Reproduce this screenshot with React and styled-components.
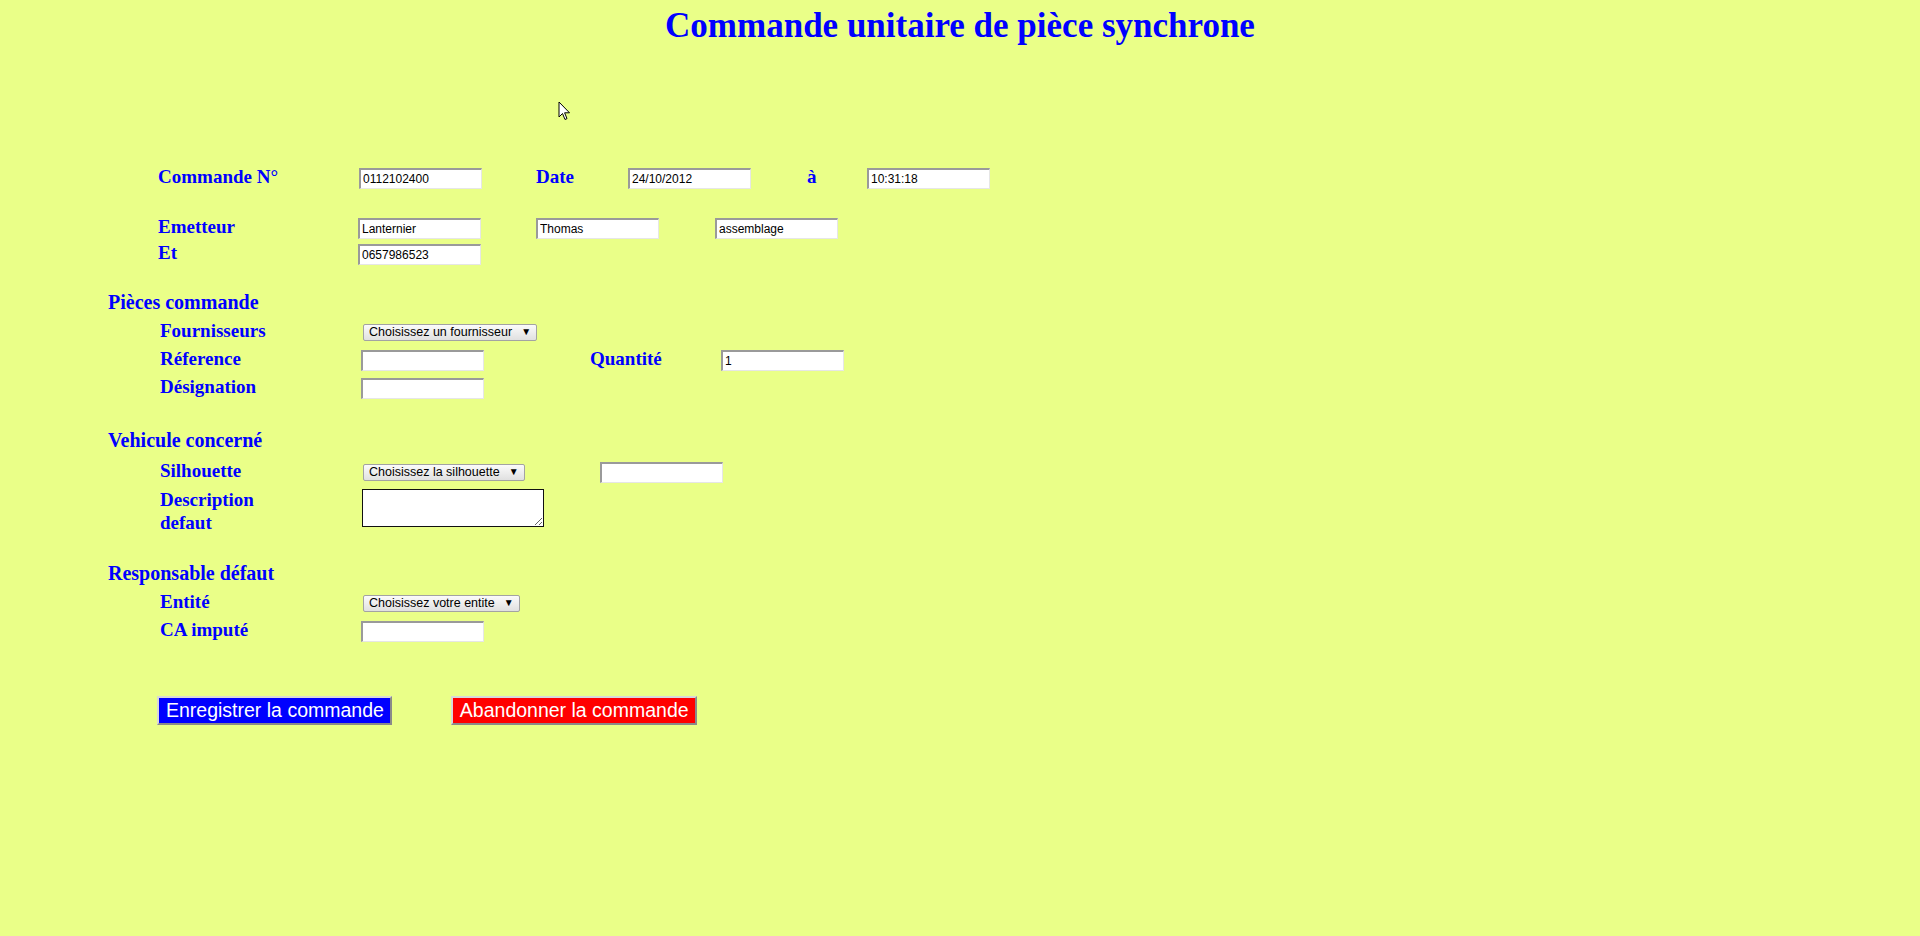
import React from 'react';
import styled, { createGlobalStyle } from 'styled-components';

const GlobalStyle = createGlobalStyle`
  html, body {
    margin: 0;
    padding: 0;
    background-color: #eaff88;
  }
  body {
    font-family: "Liberation Serif", "Times New Roman", serif;
    min-height: 936px;
  }
`;

const Page = styled.div`
  position: relative;
  min-height: 936px;
`;

const Title = styled.h1`
  margin: 0;
  padding-top: 5px;
  text-align: center;
  font-family: "Liberation Serif", "Times New Roman", serif;
  font-size: 35px;
  font-weight: bold;
  color: #0000ff;
  line-height: 41px;
`;

const Form = styled.form`
  padding-left: 108px;
  padding-top: ${({ top }) => top || 0}px;
`;

const Section = styled.div`
  margin-top: ${({ gap }) => gap || 0}px;
`;

const Heading = styled.div`
  font-size: 20px;
  font-weight: bold;
  color: #0000ff;
  line-height: 22px;
  height: 22px;
  padding-bottom: 4px;
`;

const Row = styled.div`
  display: grid;
  grid-template-columns: ${({ cols }) => cols};
  align-items: ${({ top }) => (top ? 'start' : 'center')};
  height: ${({ h }) => h || 26}px;
  padding-left: ${({ indent }) => indent ?? 52}px;
  margin-top: ${({ gap }) => gap || 0}px;
`;

const Label = styled.span`
  font-size: 19px;
  font-weight: bold;
  color: #0000ff;
  line-height: ${({ top }) => (top ? 23 : 20)}px;
  margin-bottom: ${({ top }) => (top ? 0 : 2)}px;
`;

const Field = styled.input`
  box-sizing: border-box;
  width: 123px;
  height: 21px;
  margin: 0;
  padding: 1px 2px;
  font-family: "Liberation Sans", Arial, sans-serif;
  font-size: 12px;
  color: #000;
  background: #fff;
  border-style: solid;
  border-width: 2px 1px 1px 2px;
  border-color: #9a9a9a #e6e6e6 #e6e6e6 #9a9a9a;
  outline: none;
`;

const SelectBox = styled.span`
  display: inline-flex;
  align-items: center;
  box-sizing: border-box;
  height: 17px;
  padding: 0 5px 0 5px;
  gap: 9px;
  font-family: "Liberation Sans", Arial, sans-serif;
  font-size: 12.5px;
  color: #000;
  border: 1px solid #a3a3a3;
  border-radius: 2px;
  background: linear-gradient(#fbfbfb, #e0e0e0);
  white-space: nowrap;
  justify-self: start;
`;

const Arrow = styled.span`
  font-size: 10px;
  line-height: 1;
`;

const Area = styled.textarea`
  box-sizing: border-box;
  width: 182px;
  height: 38px;
  margin: 1px 0 0 0;
  border: 1px solid #111;
  background: #fff;
  font-family: "Liberation Mono", monospace;
  font-size: 12px;
`;

const Buttons = styled.div`
  display: flex;
  gap: 59px;
  padding-left: 49px;
  margin-top: 51px;
`;

const Action = styled.button`
  box-sizing: border-box;
  height: 29px;
  padding: 0 6px 0 7px;
  font-family: "Liberation Sans", Arial, sans-serif;
  font-size: 19.5px;
  color: #fff;
  background: ${({ tone }) => tone};
  border-style: solid;
  border-width: 2px;
  border-color: #d8d8d8 #8a8a8a #8a8a8a #d8d8d8;
  cursor: pointer;
`;

const Cursor = styled.svg`
  position: absolute;
  left: 558px;
  top: 101px;
`;

const Select = ({ children }) => (
  <SelectBox>
    {children}
    <Arrow>▼</Arrow>
  </SelectBox>
);

const App = () => (
  <Page>
    <GlobalStyle />
    <Title>Commande unitaire de pièce synchrone</Title>
    <Form top={119} onSubmit={(e) => e.preventDefault()}>
      <Section>
        <Row indent={50} cols="201px 177px 92px 179px 60px 123px">
          <Label>Commande N°</Label>
          <Field defaultValue="0112102400" />
          <Label>Date</Label>
          <Field defaultValue="24/10/2012" />
          <Label>à</Label>
          <Field defaultValue="10:31:18" />
        </Row>
        <Row indent={50} gap={24} cols="200px 178px 179px 123px">
          <Label>Emetteur</Label>
          <Field defaultValue="Lanternier" />
          <Field defaultValue="Thomas" />
          <Field defaultValue="assemblage" />
        </Row>
        <Row indent={50} cols="200px 123px">
          <Label>Et</Label>
          <Field defaultValue="0657986523" />
        </Row>
      </Section>

      <Section gap={24}>
        <Heading>Pièces commande</Heading>
        <Row h={28} gap={1} cols="203px auto">
          <Label>Fournisseurs</Label>
          <Select>Choisissez un fournisseur</Select>
        </Row>
        <Row h={28} cols="201px 229px 131px 123px">
          <Label>Réference</Label>
          <Field />
          <Label>Quantité</Label>
          <Field defaultValue="1" />
        </Row>
        <Row h={28} cols="201px 123px">
          <Label>Désignation</Label>
          <Field />
        </Row>
      </Section>

      <Section gap={27}>
        <Heading>Vehicule concerné</Heading>
        <Row h={28} gap={3} cols="203px 237px 123px">
          <Label>Silhouette</Label>
          <Select>Choisissez la silhouette</Select>
          <Field />
        </Row>
        <Row top h={46} gap={2} cols="202px auto">
          <Label top>
            Description
            <br />
            defaut
          </Label>
          <Area />
        </Row>
      </Section>

      <Section gap={28}>
        <Heading>Responsable défaut</Heading>
        <Row h={28} gap={1} cols="203px auto">
          <Label>Entité</Label>
          <Select>Choisissez votre entite</Select>
        </Row>
        <Row h={28} cols="201px 123px">
          <Label>CA imputé</Label>
          <Field />
        </Row>
      </Section>

      <Buttons>
        <Action type="submit" tone="#0000ff">Enregistrer la commande</Action>
        <Action type="button" tone="#ff0000">Abandonner la commande</Action>
      </Buttons>
    </Form>

    <Cursor width="13" height="20" viewBox="0 0 13 20">
      <path
        d="M1 1 L1 16 L4.5 12.5 L7 18.5 L9 17.6 L6.6 11.8 L11.5 11.8 Z"
        fill="#fff"
        stroke="#000"
        strokeWidth="1"
        strokeLinejoin="round"
      />
    </Cursor>
  </Page>
);

export default App;
